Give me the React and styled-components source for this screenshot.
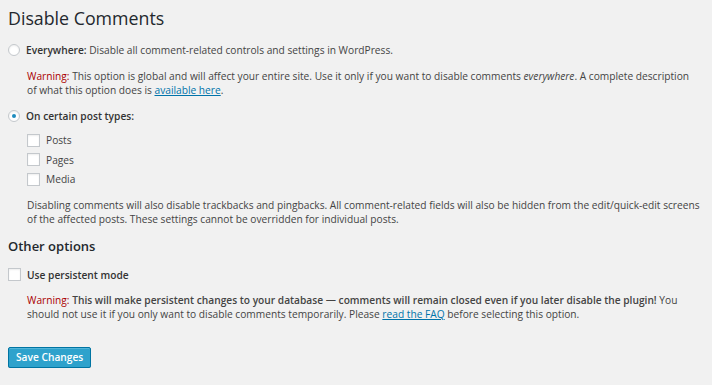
import React from 'react';
import styled, { createGlobalStyle } from 'styled-components';

const GlobalStyle = createGlobalStyle`
  html, body {
    margin: 0;
    padding: 0;
    background: #f1f1f1;
  }
  body {
    font-family: "Open Sans", "Liberation Sans", sans-serif;
    font-size: 10.2px;
    line-height: 14px;
    color: #444;
  }
`;

function App() {
  return (
    <>
      <GlobalStyle />
      <Wrap>
        <Title>Disable Comments</Title>

        <OptionRow>
          <Radio />
          <span><strong>Everywhere:</strong> Disable all comment-related controls and settings in WordPress.</span>
        </OptionRow>
        <Note $top={12} $width={668}>
          <Warn>Warning:</Warn> This option is global and will affect your entire site. Use it only if you want to disable comments <em>everywhere</em>. A complete description of what this option does is <Link href="#">available here</Link>.
        </Note>

        <OptionRow $top={12}>
          <Radio $checked />
          <strong>On certain post types:</strong>
        </OptionRow>
        <TypeList>
          {['Posts', 'Pages', 'Media'].map(t => (
            <TypeRow key={t}>
              <Checkbox />
              <span>{t}</span>
            </TypeRow>
          ))}
        </TypeList>
        <Note $top={11.5}>
          Disabling comments will also disable trackbacks and pingbacks. All comment-related fields will also be hidden from the edit/quick-edit screens of the affected posts. These settings cannot be overridden for individual posts.
        </Note>

        <SubTitle>Other options</SubTitle>
        <OptionRow $top={13}>
          <Checkbox />
          <strong>Use persistent mode</strong>
        </OptionRow>
        <Note $top={11}>
          <Warn>Warning:</Warn> <strong>This will make persistent changes to your database &mdash; comments will remain closed even if you later disable the plugin!</strong> You should not use it if you only want to disable comments temporarily. Please <Link href="#">read the FAQ</Link> before selecting this option.
        </Note>

        <SaveButton>Save Changes</SaveButton>
      </Wrap>
    </>
  );
}

const Wrap = styled.div`
  padding: 0 8px;
  display: flex;
  flex-direction: column;
  align-items: flex-start;
  width: 712px;
  box-sizing: border-box;
`;

const Title = styled.h1`
  margin: 7px 0 14px;
  font-size: 17.8px;
  line-height: 22px;
  font-weight: 400;
  color: #23282d;
`;

const SubTitle = styled.h2`
  margin: 11px 0 0;
  font-size: 13px;
  line-height: 18px;
  font-weight: 600;
  color: #23282d;
`;

const OptionRow = styled.div`
  display: flex;
  align-items: center;
  gap: 6px;
  height: 14px;
  margin-top: ${p => p.$top || 0}px;

  strong {
    font-weight: 600;
    color: #333;
  }
`;

const Radio = styled.span`
  width: 12px;
  height: 12px;
  box-sizing: border-box;
  border-radius: 50%;
  border: 1px solid #c4c8cc;
  background: #fff;
  box-shadow: inset 0 1px 2px rgba(0, 0, 0, 0.07);
  display: flex;
  align-items: center;
  justify-content: center;
  flex-shrink: 0;

  &::after {
    content: '';
    display: ${p => (p.$checked ? 'block' : 'none')};
    width: 4px;
    height: 4px;
    border-radius: 50%;
    background: #1e8cbe;
  }
`;

const Checkbox = styled.span`
  width: 13px;
  height: 13px;
  box-sizing: border-box;
  border: 1px solid #c4c8cc;
  background: #fff;
  box-shadow: inset 0 1px 2px rgba(0, 0, 0, 0.07);
  flex-shrink: 0;
`;

const Note = styled.p`
  margin: ${p => p.$top || 0}px 0 0;
  padding-left: 19px;
  width: ${p => p.$width || 675}px;
  color: #444;

  strong {
    font-weight: 600;
    color: #444;
  }
  em {
    font-style: italic;
  }
`;

const Warn = styled.span`
  color: #a00;
`;

const Link = styled.a`
  color: #0073aa;
  text-decoration: underline;
`;

const TypeList = styled.div`
  display: flex;
  flex-direction: column;
  gap: 5.5px;
  margin-top: 10px;
  padding-left: 19px;
`;

const TypeRow = styled.div`
  display: flex;
  align-items: center;
  gap: 6px;
  height: 14px;
`;

const SaveButton = styled.button`
  margin-top: 26px;
  height: 21px;
  padding: 0 7px;
  border: 1px solid #0074a2;
  border-radius: 2px;
  background: #2ea2cc;
  box-shadow: inset 0 1px 0 rgba(120, 200, 230, 0.5), 0 1px 0 rgba(0, 0, 0, 0.15);
  color: #fff;
  font-family: "Open Sans", "Liberation Sans", sans-serif;
  font-size: 10.2px;
  font-weight: 600;
  cursor: pointer;
`;

export default App;
